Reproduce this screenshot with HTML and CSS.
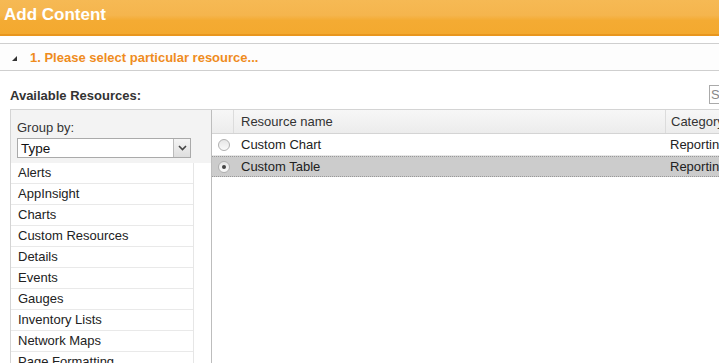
FILE: index.html
```html
<!DOCTYPE html>
<html>
<head>
<meta charset="utf-8">
<link rel="stylesheet" href="styles.css">
</head>
<body>
<div class="header">Add Content</div>
<div class="section">
  <span class="tri"></span>
  <span class="section-title">1. Please select particular resource...</span>
</div>
<div class="avail">
  <span class="avail-label">Available Resources:</span>
  <span class="search">S</span>
</div>
<div class="main">
  <div class="left">
    <div class="groupby">
      <div class="gb-label">Group by:</div>
      <div class="select"><span class="sel-text">Type</span><span class="sel-btn"><svg width="9" height="6" viewBox="0 0 9 6"><path d="M1 1 L4.5 4.5 L8 1" fill="none" stroke="#444" stroke-width="1.6"/></svg></span></div>
    </div>
    <div class="list">
      <div class="item">Alerts</div>
      <div class="item">AppInsight</div>
      <div class="item">Charts</div>
      <div class="item">Custom Resources</div>
      <div class="item">Details</div>
      <div class="item">Events</div>
      <div class="item">Gauges</div>
      <div class="item">Inventory Lists</div>
      <div class="item">Network Maps</div>
      <div class="item">Page Formatting</div>
    </div>
  </div>
  <div class="right">
    <div class="row head">
      <div class="c-radio"></div>
      <div class="c-name">Resource name</div>
      <div class="c-cat">Category</div>
    </div>
    <div class="row">
      <div class="c-radio"><span class="radio"></span></div>
      <div class="c-name">Custom Chart</div>
      <div class="c-cat">Reporting</div>
    </div>
    <div class="row sel">
      <div class="c-radio"><span class="radio on"></span></div>
      <div class="c-name">Custom Table</div>
      <div class="c-cat">Reporting</div>
    </div>
  </div>
</div>
</body>
</html>
```
FILE: styles.css
```css
html, body { margin: 0; padding: 0; }
body {
  width: 719px; height: 363px; overflow: hidden; background: #fff;
  font-family: "Liberation Sans", Arial, sans-serif; font-size: 13px; color: #222;
}
.header {
  height: 34px; border-bottom: 2px solid #e8961e;
  background: linear-gradient(to bottom, #f6b954 0%, #f5b54d 45%, #f4ab33 60%, #f3a92f 100%);
  color: #fff; font-weight: bold; font-size: 17px; line-height: 30px; padding-left: 4px;
}
.section {
  margin-top: 7px; height: 26px; border-top: 1px solid #cfcfcf; border-bottom: 1px solid #cfcfcf;
  display: flex; align-items: center; background: #fdfdfd;
}
.tri {
  width: 0; height: 0; margin-left: 12px; margin-right: 13px;
  border-left: 5px solid transparent; border-bottom: 5px solid #333;
  margin-top: 2px;
}
.section-title { color: #ef8c1d; font-weight: bold; font-size: 13px; }
.avail {
  margin-left: 10px; height: 38px; border-bottom: 1px solid #d4d4d4;
  display: flex; align-items: center; justify-content: space-between;
}
.avail-label { font-weight: bold; color: #333; font-size: 13px; margin-top: 11px; }
.search {
  width: 10px; height: 17px; border: 1px solid #aaa; border-right: none; color: #888;
  font-size: 13px; line-height: 17px; padding-left: 1px; margin-top: 9px; margin-right: -2px; overflow: hidden;
}
.main { display: flex; margin-left: 10px; height: 260px; }
.left { width: 200px; flex-shrink: 0; border-left: 1px solid #d4d4d4; border-right: 1px solid #bdbdbd; }
.groupby { background: #f3f3f3; height: 53px; padding: 10px 0 0 6px; box-sizing: border-box; }
.gb-label { color: #333; font-size: 13px; line-height: 16px; }
.select {
  margin-top: 2px; width: 174px; height: 20px; border: 1px solid #aaa; background: #fff;
  display: flex; box-sizing: border-box;
}
.sel-text { flex: 1; font-size: 13.5px; line-height: 19px; padding-left: 3px; color: #111; }
.sel-btn {
  width: 16px; border-left: 1px solid #bbb; background: linear-gradient(#f4f4f4, #dedede);
  display: flex; align-items: center; justify-content: center;
}
.list { width: 182px; border-right: 1px solid #e6e6e6; }
.item {
  height: 20px; line-height: 20px; border-bottom: 1px solid #e9e9e9; padding-left: 7px;
  font-size: 13px; color: #222;
}
.right { flex: 1; min-width: 0; }
.row { display: flex; height: 21px; line-height: 21px; border-bottom: 1px solid #e6e6e6; font-size: 13px; }
.row.head {
  height: 23px; line-height: 23px; border-bottom: 1px solid #d4d4d4;
  background: linear-gradient(#f7f7f7, #ececec); color: #333;
}
.row.sel { background: #cccccc; border-top: 1px dotted #999; border-bottom: 1px dotted #999; height: 19px; line-height: 19px; }
.c-radio { width: 22px; flex-shrink: 0; display: flex; align-items: center; justify-content: center; }
.head .c-radio { border-right: 1px solid #dcdcdc; width: 21px; }
.c-name { width: 424px; flex-shrink: 0; padding-left: 7px; }
.head .c-name { border-right: 1px solid #dcdcdc; }
.c-cat { padding-left: 5px; white-space: nowrap; }
.radio {
  width: 12px; height: 12px; border-radius: 50%; border: 1px solid #b0b0b0;
  background: linear-gradient(#e6e6e6, #fafafa); box-sizing: border-box; position: relative;
  margin-left: 2px;
}
.radio.on::after {
  content: ""; position: absolute; left: 3px; top: 3px; width: 4px; height: 4px;
  border-radius: 50%; background: #444;
}
```
